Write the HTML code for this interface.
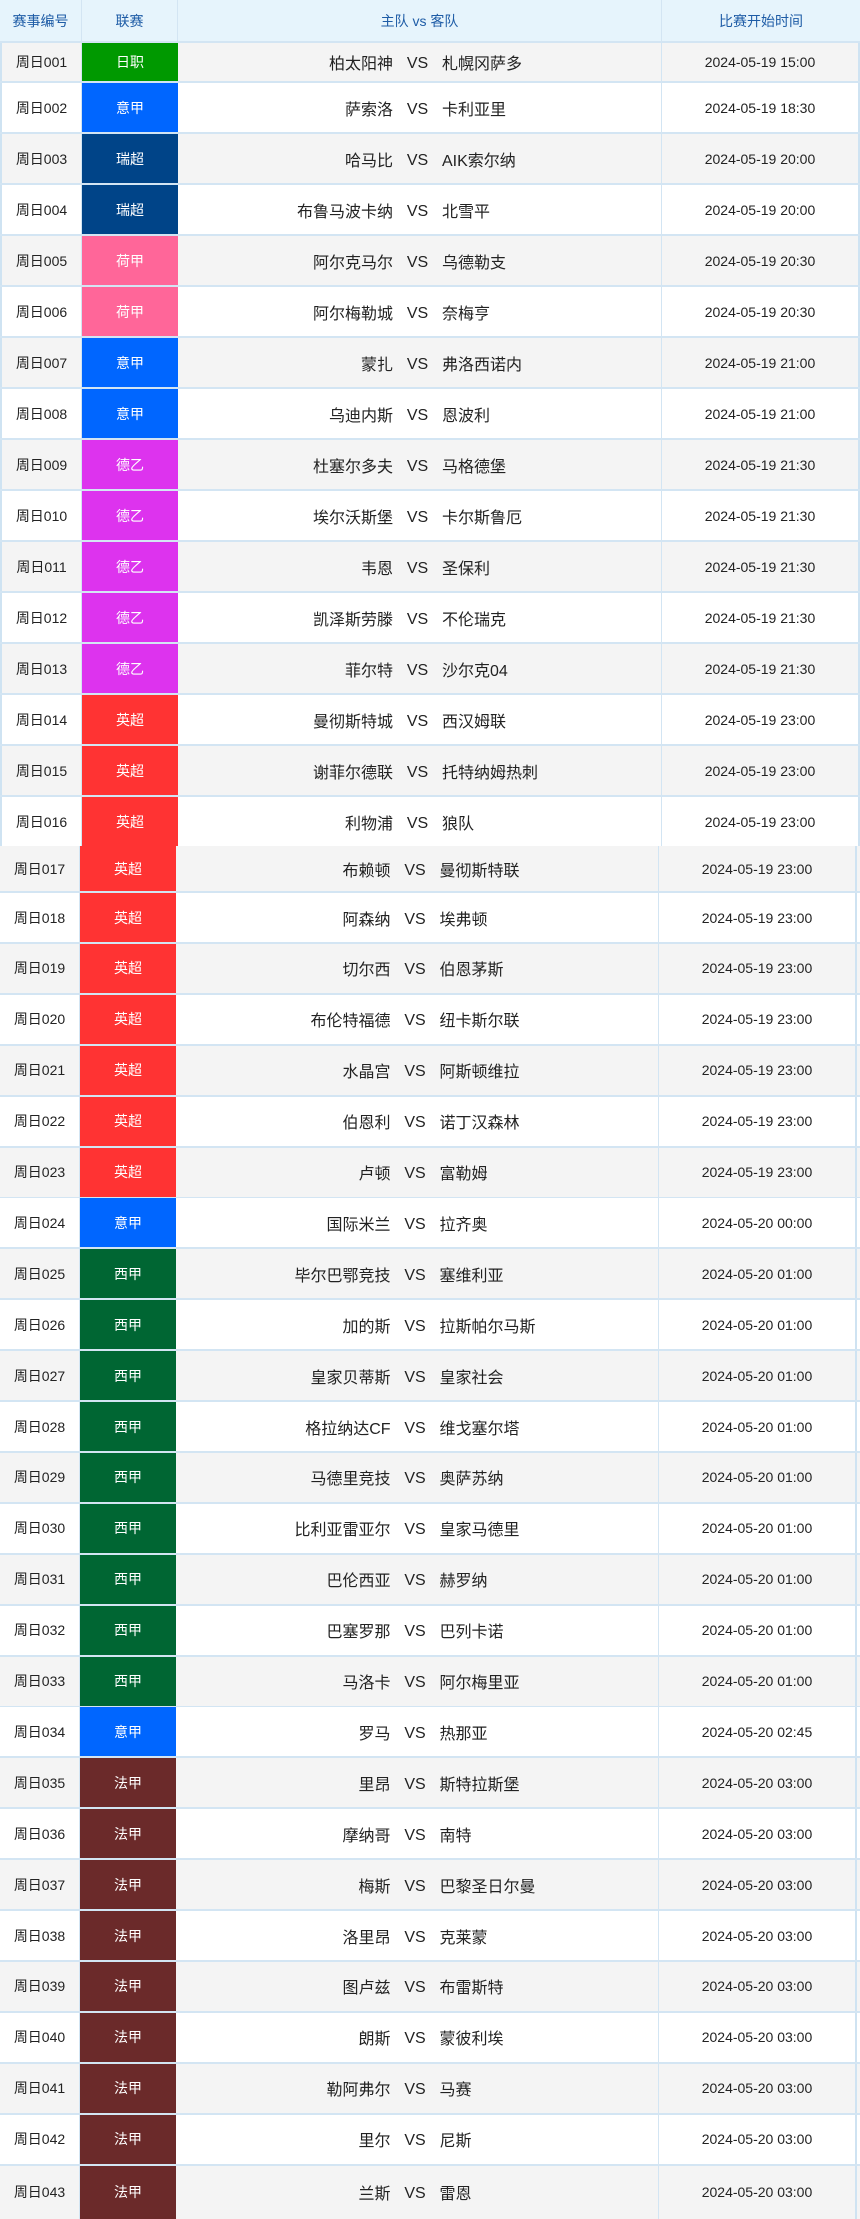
<!DOCTYPE html>
<html><head><meta charset="utf-8"><style>
*{margin:0;padding:0;box-sizing:border-box}
body{width:860px;height:2218px;overflow:hidden;background:#fff;position:relative;font-family:"Liberation Sans","Noto Sans CJK SC",sans-serif;color:#222}
.r{position:absolute;left:0;width:860px;display:flex;border-bottom:2px solid #d3e5f3}
.r>div{display:flex;align-items:center;justify-content:center;height:100%}
.g{background:#f4f4f4}.w{background:#fff}
.t1 .c1{width:82px;border-left:2px solid #cfe3f2;border-right:1px solid #d3e5f3}
.t1 .c2{width:96px}
.t1 .c3{width:484px;border-right:1px solid #d3e5f3}
.t1 .c4{width:198px;border-right:2px solid #cfe3f2}
.t2 .c1{width:80px;border-right:1px solid #d3e5f3}
.t2 .c2{width:96px}
.t2 .c3{width:483px;border-right:1px solid #d3e5f3}
.t2 .c4{width:198px;border-right:2px solid #cfe3f2;margin-right:3px}
.c1{font-size:14px}
.c2{color:#fff;font-size:14px}
.c3{font-size:16px}
.c3 .h{width:215px;text-align:right}
.c3 .v{width:49px;text-align:center;position:relative;top:2px}
.c3 .a{width:219px;text-align:left}
.c4{font-size:14px}
.hd{position:absolute;left:0;top:0;width:860px;height:43px;background:#e6f4fc;display:flex;border-bottom:2px solid #d3e5f3;color:#1e5ca6;font-size:14px}
.hd div{display:flex;align-items:center;justify-content:center;border-right:1px solid #d3e5f3}
</style></head><body>
<div class="hd"><div style="width:82px">赛事编号</div><div style="width:96px">联赛</div><div style="width:484px">主队 vs 客队</div><div style="width:198px;border-right:none">比赛开始时间</div></div>

<div class="r t1 g" style="top:43px;height:40px"><div class="c1">周日001</div><div class="c2" style="background:#009900">日职</div><div class="c3"><span class="h">柏太阳神</span><span class="v">VS</span><span class="a">札幌冈萨多</span></div><div class="c4">2024-05-19 15:00</div></div>
<div class="r t1 w" style="top:83px;height:51px"><div class="c1">周日002</div><div class="c2" style="background:#0066ff">意甲</div><div class="c3"><span class="h">萨索洛</span><span class="v">VS</span><span class="a">卡利亚里</span></div><div class="c4">2024-05-19 18:30</div></div>
<div class="r t1 g" style="top:134px;height:51px"><div class="c1">周日003</div><div class="c2" style="background:#004488">瑞超</div><div class="c3"><span class="h">哈马比</span><span class="v">VS</span><span class="a">AIK索尔纳</span></div><div class="c4">2024-05-19 20:00</div></div>
<div class="r t1 w" style="top:185px;height:51px"><div class="c1">周日004</div><div class="c2" style="background:#004488">瑞超</div><div class="c3"><span class="h">布鲁马波卡纳</span><span class="v">VS</span><span class="a">北雪平</span></div><div class="c4">2024-05-19 20:00</div></div>
<div class="r t1 g" style="top:236px;height:51px"><div class="c1">周日005</div><div class="c2" style="background:#ff6699">荷甲</div><div class="c3"><span class="h">阿尔克马尔</span><span class="v">VS</span><span class="a">乌德勒支</span></div><div class="c4">2024-05-19 20:30</div></div>
<div class="r t1 w" style="top:287px;height:51px"><div class="c1">周日006</div><div class="c2" style="background:#ff6699">荷甲</div><div class="c3"><span class="h">阿尔梅勒城</span><span class="v">VS</span><span class="a">奈梅亨</span></div><div class="c4">2024-05-19 20:30</div></div>
<div class="r t1 g" style="top:338px;height:51px"><div class="c1">周日007</div><div class="c2" style="background:#0066ff">意甲</div><div class="c3"><span class="h">蒙扎</span><span class="v">VS</span><span class="a">弗洛西诺内</span></div><div class="c4">2024-05-19 21:00</div></div>
<div class="r t1 w" style="top:389px;height:51px"><div class="c1">周日008</div><div class="c2" style="background:#0066ff">意甲</div><div class="c3"><span class="h">乌迪内斯</span><span class="v">VS</span><span class="a">恩波利</span></div><div class="c4">2024-05-19 21:00</div></div>
<div class="r t1 g" style="top:440px;height:51px"><div class="c1">周日009</div><div class="c2" style="background:#dd33ee">德乙</div><div class="c3"><span class="h">杜塞尔多夫</span><span class="v">VS</span><span class="a">马格德堡</span></div><div class="c4">2024-05-19 21:30</div></div>
<div class="r t1 w" style="top:491px;height:51px"><div class="c1">周日010</div><div class="c2" style="background:#dd33ee">德乙</div><div class="c3"><span class="h">埃尔沃斯堡</span><span class="v">VS</span><span class="a">卡尔斯鲁厄</span></div><div class="c4">2024-05-19 21:30</div></div>
<div class="r t1 g" style="top:542px;height:51px"><div class="c1">周日011</div><div class="c2" style="background:#dd33ee">德乙</div><div class="c3"><span class="h">韦恩</span><span class="v">VS</span><span class="a">圣保利</span></div><div class="c4">2024-05-19 21:30</div></div>
<div class="r t1 w" style="top:593px;height:51px"><div class="c1">周日012</div><div class="c2" style="background:#dd33ee">德乙</div><div class="c3"><span class="h">凯泽斯劳滕</span><span class="v">VS</span><span class="a">不伦瑞克</span></div><div class="c4">2024-05-19 21:30</div></div>
<div class="r t1 g" style="top:644px;height:51px"><div class="c1">周日013</div><div class="c2" style="background:#dd33ee">德乙</div><div class="c3"><span class="h">菲尔特</span><span class="v">VS</span><span class="a">沙尔克04</span></div><div class="c4">2024-05-19 21:30</div></div>
<div class="r t1 w" style="top:695px;height:51px"><div class="c1">周日014</div><div class="c2" style="background:#ff3333">英超</div><div class="c3"><span class="h">曼彻斯特城</span><span class="v">VS</span><span class="a">西汉姆联</span></div><div class="c4">2024-05-19 23:00</div></div>
<div class="r t1 g" style="top:746px;height:51px"><div class="c1">周日015</div><div class="c2" style="background:#ff3333">英超</div><div class="c3"><span class="h">谢菲尔德联</span><span class="v">VS</span><span class="a">托特纳姆热刺</span></div><div class="c4">2024-05-19 23:00</div></div>
<div class="r t1 w" style="top:797px;height:49px;border-bottom:none"><div class="c1">周日016</div><div class="c2" style="background:#ff3333">英超</div><div class="c3"><span class="h">利物浦</span><span class="v">VS</span><span class="a">狼队</span></div><div class="c4">2024-05-19 23:00</div></div>

<div class="r t2 g" style="top:846px;height:47px"><div class="c1">周日017</div><div class="c2" style="background:#ff3333">英超</div><div class="c3"><span class="h">布赖顿</span><span class="v">VS</span><span class="a">曼彻斯特联</span></div><div class="c4">2024-05-19 23:00</div></div>
<div class="r t2 w" style="top:893px;height:51px"><div class="c1">周日018</div><div class="c2" style="background:#ff3333">英超</div><div class="c3"><span class="h">阿森纳</span><span class="v">VS</span><span class="a">埃弗顿</span></div><div class="c4">2024-05-19 23:00</div></div>
<div class="r t2 g" style="top:943.9px;height:51px"><div class="c1">周日019</div><div class="c2" style="background:#ff3333">英超</div><div class="c3"><span class="h">切尔西</span><span class="v">VS</span><span class="a">伯恩茅斯</span></div><div class="c4">2024-05-19 23:00</div></div>
<div class="r t2 w" style="top:994.8px;height:51px"><div class="c1">周日020</div><div class="c2" style="background:#ff3333">英超</div><div class="c3"><span class="h">布伦特福德</span><span class="v">VS</span><span class="a">纽卡斯尔联</span></div><div class="c4">2024-05-19 23:00</div></div>
<div class="r t2 g" style="top:1045.7px;height:51px"><div class="c1">周日021</div><div class="c2" style="background:#ff3333">英超</div><div class="c3"><span class="h">水晶宫</span><span class="v">VS</span><span class="a">阿斯顿维拉</span></div><div class="c4">2024-05-19 23:00</div></div>
<div class="r t2 w" style="top:1096.6px;height:51px"><div class="c1">周日022</div><div class="c2" style="background:#ff3333">英超</div><div class="c3"><span class="h">伯恩利</span><span class="v">VS</span><span class="a">诺丁汉森林</span></div><div class="c4">2024-05-19 23:00</div></div>
<div class="r t2 g" style="top:1147.5px;height:51px"><div class="c1">周日023</div><div class="c2" style="background:#ff3333">英超</div><div class="c3"><span class="h">卢顿</span><span class="v">VS</span><span class="a">富勒姆</span></div><div class="c4">2024-05-19 23:00</div></div>
<div class="r t2 w" style="top:1198.4px;height:51px"><div class="c1">周日024</div><div class="c2" style="background:#0066ff">意甲</div><div class="c3"><span class="h">国际米兰</span><span class="v">VS</span><span class="a">拉齐奥</span></div><div class="c4">2024-05-20 00:00</div></div>
<div class="r t2 g" style="top:1249.3px;height:51px"><div class="c1">周日025</div><div class="c2" style="background:#006633">西甲</div><div class="c3"><span class="h">毕尔巴鄂竞技</span><span class="v">VS</span><span class="a">塞维利亚</span></div><div class="c4">2024-05-20 01:00</div></div>
<div class="r t2 w" style="top:1300.2px;height:51px"><div class="c1">周日026</div><div class="c2" style="background:#006633">西甲</div><div class="c3"><span class="h">加的斯</span><span class="v">VS</span><span class="a">拉斯帕尔马斯</span></div><div class="c4">2024-05-20 01:00</div></div>
<div class="r t2 g" style="top:1351.1px;height:51px"><div class="c1">周日027</div><div class="c2" style="background:#006633">西甲</div><div class="c3"><span class="h">皇家贝蒂斯</span><span class="v">VS</span><span class="a">皇家社会</span></div><div class="c4">2024-05-20 01:00</div></div>
<div class="r t2 w" style="top:1402px;height:51px"><div class="c1">周日028</div><div class="c2" style="background:#006633">西甲</div><div class="c3"><span class="h">格拉纳达CF</span><span class="v">VS</span><span class="a">维戈塞尔塔</span></div><div class="c4">2024-05-20 01:00</div></div>
<div class="r t2 g" style="top:1452.9px;height:51px"><div class="c1">周日029</div><div class="c2" style="background:#006633">西甲</div><div class="c3"><span class="h">马德里竞技</span><span class="v">VS</span><span class="a">奥萨苏纳</span></div><div class="c4">2024-05-20 01:00</div></div>
<div class="r t2 w" style="top:1503.8px;height:51px"><div class="c1">周日030</div><div class="c2" style="background:#006633">西甲</div><div class="c3"><span class="h">比利亚雷亚尔</span><span class="v">VS</span><span class="a">皇家马德里</span></div><div class="c4">2024-05-20 01:00</div></div>
<div class="r t2 g" style="top:1554.7px;height:51px"><div class="c1">周日031</div><div class="c2" style="background:#006633">西甲</div><div class="c3"><span class="h">巴伦西亚</span><span class="v">VS</span><span class="a">赫罗纳</span></div><div class="c4">2024-05-20 01:00</div></div>
<div class="r t2 w" style="top:1605.6px;height:51px"><div class="c1">周日032</div><div class="c2" style="background:#006633">西甲</div><div class="c3"><span class="h">巴塞罗那</span><span class="v">VS</span><span class="a">巴列卡诺</span></div><div class="c4">2024-05-20 01:00</div></div>
<div class="r t2 g" style="top:1656.5px;height:51px"><div class="c1">周日033</div><div class="c2" style="background:#006633">西甲</div><div class="c3"><span class="h">马洛卡</span><span class="v">VS</span><span class="a">阿尔梅里亚</span></div><div class="c4">2024-05-20 01:00</div></div>
<div class="r t2 w" style="top:1707.4px;height:51px"><div class="c1">周日034</div><div class="c2" style="background:#0066ff">意甲</div><div class="c3"><span class="h">罗马</span><span class="v">VS</span><span class="a">热那亚</span></div><div class="c4">2024-05-20 02:45</div></div>
<div class="r t2 g" style="top:1758.3px;height:51px"><div class="c1">周日035</div><div class="c2" style="background:#6b2a2a">法甲</div><div class="c3"><span class="h">里昂</span><span class="v">VS</span><span class="a">斯特拉斯堡</span></div><div class="c4">2024-05-20 03:00</div></div>
<div class="r t2 w" style="top:1809.2px;height:51px"><div class="c1">周日036</div><div class="c2" style="background:#6b2a2a">法甲</div><div class="c3"><span class="h">摩纳哥</span><span class="v">VS</span><span class="a">南特</span></div><div class="c4">2024-05-20 03:00</div></div>
<div class="r t2 g" style="top:1860.1px;height:51px"><div class="c1">周日037</div><div class="c2" style="background:#6b2a2a">法甲</div><div class="c3"><span class="h">梅斯</span><span class="v">VS</span><span class="a">巴黎圣日尔曼</span></div><div class="c4">2024-05-20 03:00</div></div>
<div class="r t2 w" style="top:1911px;height:51px"><div class="c1">周日038</div><div class="c2" style="background:#6b2a2a">法甲</div><div class="c3"><span class="h">洛里昂</span><span class="v">VS</span><span class="a">克莱蒙</span></div><div class="c4">2024-05-20 03:00</div></div>
<div class="r t2 g" style="top:1961.9px;height:51px"><div class="c1">周日039</div><div class="c2" style="background:#6b2a2a">法甲</div><div class="c3"><span class="h">图卢兹</span><span class="v">VS</span><span class="a">布雷斯特</span></div><div class="c4">2024-05-20 03:00</div></div>
<div class="r t2 w" style="top:2012.8px;height:51px"><div class="c1">周日040</div><div class="c2" style="background:#6b2a2a">法甲</div><div class="c3"><span class="h">朗斯</span><span class="v">VS</span><span class="a">蒙彼利埃</span></div><div class="c4">2024-05-20 03:00</div></div>
<div class="r t2 g" style="top:2063.7px;height:51px"><div class="c1">周日041</div><div class="c2" style="background:#6b2a2a">法甲</div><div class="c3"><span class="h">勒阿弗尔</span><span class="v">VS</span><span class="a">马赛</span></div><div class="c4">2024-05-20 03:00</div></div>
<div class="r t2 w" style="top:2114.6px;height:51px"><div class="c1">周日042</div><div class="c2" style="background:#6b2a2a">法甲</div><div class="c3"><span class="h">里尔</span><span class="v">VS</span><span class="a">尼斯</span></div><div class="c4">2024-05-20 03:00</div></div>
<div class="r t2 g" style="top:2165.5px;height:53px;border-bottom:none"><div class="c1">周日043</div><div class="c2" style="background:#6b2a2a">法甲</div><div class="c3"><span class="h">兰斯</span><span class="v">VS</span><span class="a">雷恩</span></div><div class="c4">2024-05-20 03:00</div></div>
</body></html>
